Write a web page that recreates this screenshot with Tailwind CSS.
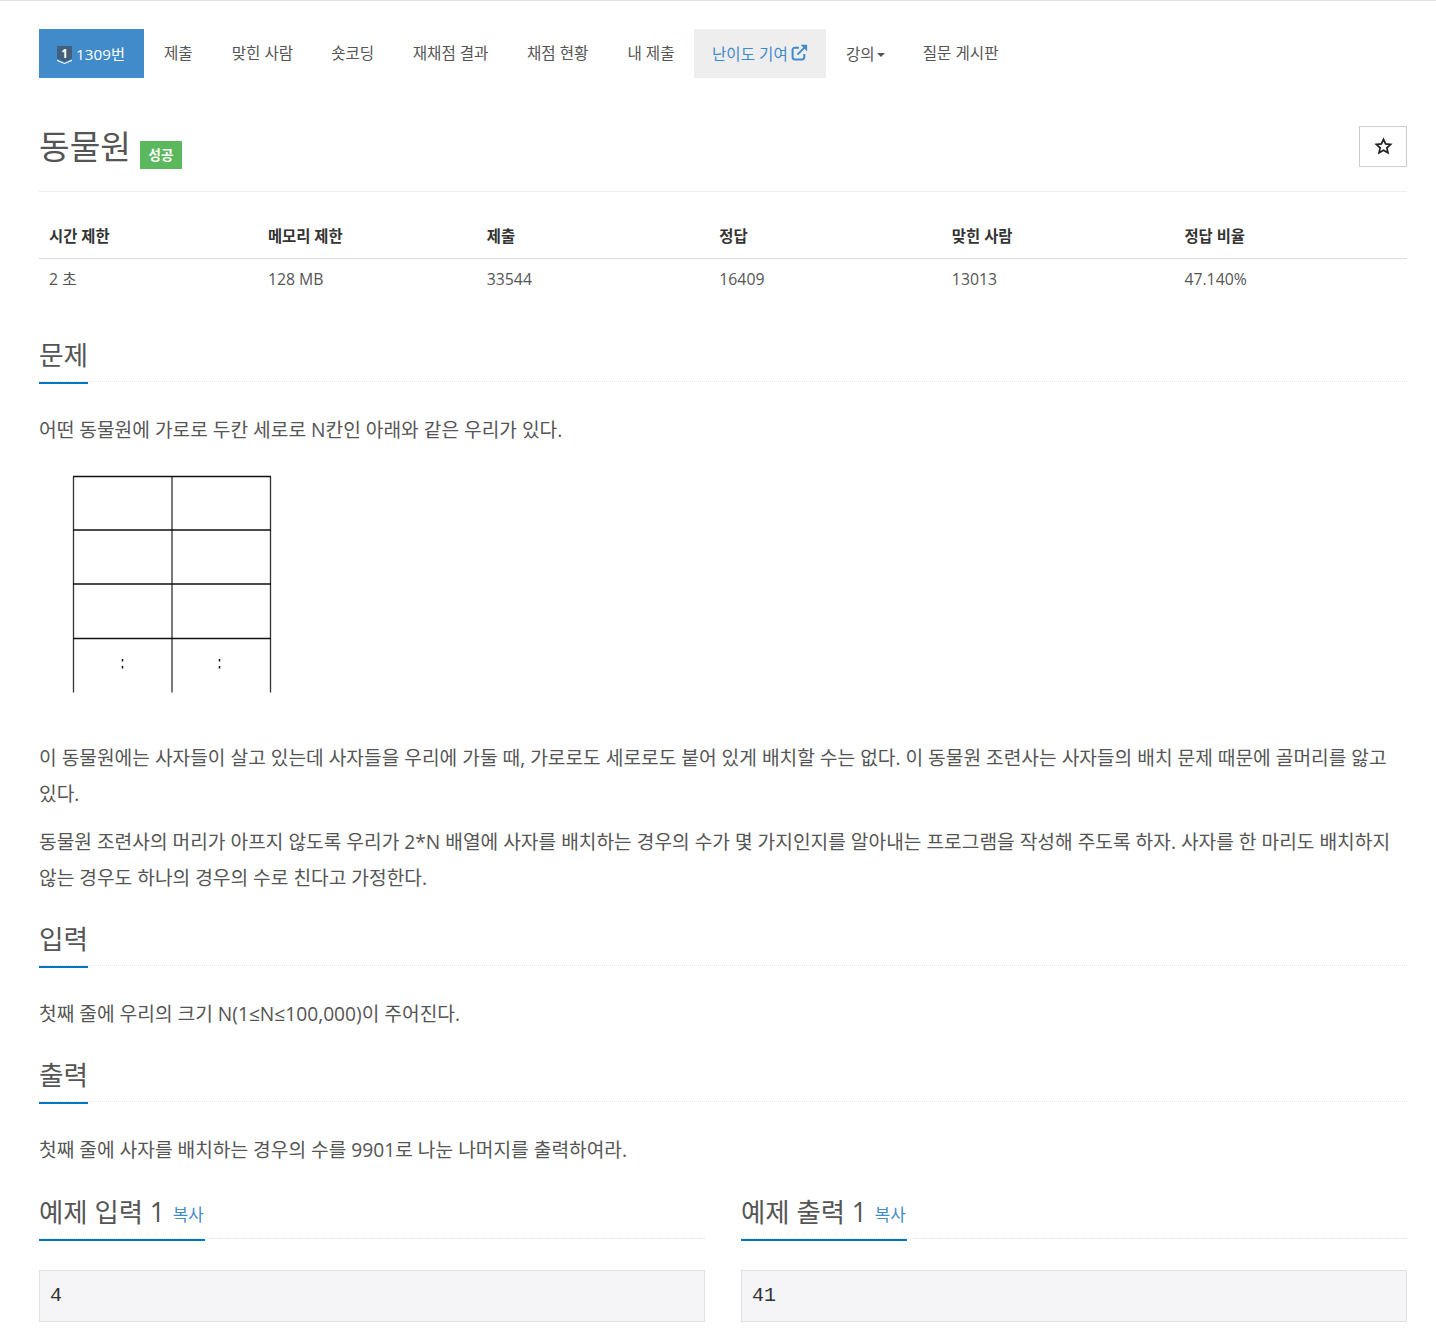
<!DOCTYPE html>
<html lang="ko">
<head>
    <meta charset="UTF-8">
    <meta name="viewport" content="width=device-width, initial-scale=1.0">
    <title>1309번: 동물원</title>
    <script src="https://cdn.jsdelivr.net/npm/@tailwindcss/browser@4"></script>
</head>
<body class="bg-white text-[#555] font-['Open_Sans','Noto_Sans_CJK_KR',sans-serif] border-t border-[#dfe3e6]">
    <div class="pl-[39px] pt-[28px]">
      <div class="w-[1368px]">
        <!-- tabs -->
        <nav class="flex h-[49px] text-[15.600px] leading-[48px] text-[#555]">
            <a class="flex items-center w-[105px] pl-[18px] bg-[#428bca] text-white text-[15.250px]">
                <svg class="w-[15px] h-[18px] mr-[4px] mt-[3px]" viewBox="0 0 15 18">
                    <path d="M0 0h15v12.500l-7.500 3.500-7.500-3.500z" fill="#435f7a"/>
                    <path d="M0 13.800l7.500 3.200 7.500-3.200v1.200l-7.500 3-7.500-3z" fill="#fff"/>
                    <text x="7.500" y="11.500" text-anchor="middle" font-size="11.500" font-weight="700" fill="#fff">1</text>
                </svg>
                1309번
            </a>
            <a class="px-[20px]">제출</a>
            <a class="px-[19px]">맞힌 사람</a>
            <a class="px-[19px]">숏코딩</a>
            <a class="px-[19.500px]">재채점 결과</a>
            <a class="pl-[19px] pr-[19.500px]">채점 현황</a>
            <a class="pl-[19.500px] pr-[19.500px]">내 제출</a>
            <a class="flex items-center px-[18px] w-[132px] bg-[#eee] text-[#428bca]">
                난이도 기여
                <svg class="w-[17px] h-[17px] ml-[3px] mb-[3px]" viewBox="0 0 16 16" fill="none" stroke="#428bca" stroke-width="1.900">
                    <path d="M12.500 9.500v3a2 2 0 0 1-2 2h-7a2 2 0 0 1-2-2v-7a2 2 0 0 1 2-2h4"/>
                    <path d="M6 10l8-8"/>
                    <path d="M9 .800h6.200v6.200z" fill="#428bca" stroke="none"/>
                </svg>
            </a>
            <a class="flex items-center pl-[20px] pr-[19px]">
                강의
                <span class="ml-[2px] mt-[2px] w-0 h-0 border-x-[4px] border-x-transparent border-t-[4px] border-t-[#555]"></span>
            </a>
            <a class="px-[19px]">질문 게시판</a>
        </nav>

        <!-- title -->
        <div class="flex items-start justify-between mt-[48px] h-[66px] border-b border-[#eee]">
            <div class="flex items-start">
                <h1 class="text-[33.300px] leading-[40px] text-[#555] font-normal">동물원</h1>
                <span class="ml-[9px] mt-[15px] w-[42px] h-[28px] bg-[#5cb85c] text-white text-[13.500px] font-semibold leading-[28px] text-center">성공</span>
            </div>
            <button class="w-[48px] h-[41px] border border-[#ccc] flex items-center justify-center">
                <svg class="w-[19px] h-[18px] mb-[2px]" viewBox="0 0 24 24" fill="none" stroke="#222" stroke-width="2.300" stroke-linejoin="miter">
                    <path d="M12 3l2.800 6.200 6.700.7-5 4.500 1.400 6.600-5.900-3.400-5.900 3.400 1.400-6.600-5-4.500 6.700-.7z"/>
                </svg>
            </button>
        </div>

        <!-- stats -->
        <div class="mt-[24px]">
            <div class="grid grid-cols-[16%_16%_17%_17%_17%_17%] h-[43px] border-b border-[#ddd] font-bold text-[15.400px] text-[#333] leading-[42px] [&>div]:pl-[10px]">
                <div>시간 제한</div>
                <div>메모리 제한</div>
                <div>제출</div>
                <div>정답</div>
                <div>맞힌 사람</div>
                <div>정답 비율</div>
            </div>
            <div class="grid grid-cols-[16%_16%_17%_17%_17%_17%] h-[41px] leading-[41px] text-[15.800px] [&>div]:pl-[10px]">
                <div>2 초</div>
                <div>128 MB</div>
                <div>33544</div>
                <div>16409</div>
                <div>13013</div>
                <div>47.140%</div>
            </div>
        </div>

        <!-- problem -->
        <section class="mt-[34px]">
            <div class="h-[48px] border-b border-dotted border-[#e4e4e4]">
                <h2 class="inline-block h-[50px] text-[26.700px] leading-[42px] border-b-2 border-[#0076c0] text-[#555] font-normal">문제</h2>
            </div>
            <div class="mt-[30px] text-[19.200px] leading-[36px]">
                <p>어떤 동물원에 가로로 두칸 세로로 N칸인 아래와 같은 우리가 있다.</p>
                <svg class="block mt-[17px] w-[300px] h-[262px]" viewBox="0 0 300 262" fill="none" stroke="#111" stroke-width="1.300">
                    <path d="M34.500 11.500v216M133 11.500v216M231.500 11.500v216" stroke="#333"/>
                    <path d="M34 11.500h198M34 65h198M34 119h198M34 173.500h198"/>
                    <path d="M83.500 194v2.500M83.500 201v2.500M180.500 194v2.500M180.500 201v2.500" stroke-width="1.500"/>
                </svg>
                <p class="mt-[13px]">이 동물원에는 사자들이 살고 있는데 사자들을 우리에 가둘 때, 가로로도 세로로도 붙어 있게 배치할 수는 없다. 이 동물원 조련사는 사자들의 배치 문제 때문에 골머리를 앓고 있다.</p>
                <p class="mt-[12px]">동물원 조련사의 머리가 아프지 않도록 우리가 2*N 배열에 사자를 배치하는 경우의 수가 몇 가지인지를 알아내는 프로그램을 작성해 주도록 하자. 사자를 한 마리도 배치하지 않는 경우도 하나의 경우의 수로 친다고 가정한다.</p>
            </div>
        </section>

        <!-- input -->
        <section class="mt-[22px]">
            <div class="h-[48px] border-b border-dotted border-[#e4e4e4]">
                <h2 class="inline-block h-[50px] text-[26.700px] leading-[42px] border-b-2 border-[#0076c0] text-[#555] font-normal">입력</h2>
            </div>
            <p class="mt-[30px] text-[19.200px] leading-[36px]">첫째 줄에 우리의 크기 N(1≤N≤100,000)이 주어진다.</p>
        </section>

        <!-- output -->
        <section class="mt-[22px]">
            <div class="h-[48px] border-b border-dotted border-[#e4e4e4]">
                <h2 class="inline-block h-[50px] text-[26.700px] leading-[42px] border-b-2 border-[#0076c0] text-[#555] font-normal">출력</h2>
            </div>
            <p class="mt-[30px] text-[19.200px] leading-[36px]">첫째 줄에 사자를 배치하는 경우의 수를 9901로 나눈 나머지를 출력하여라.</p>
        </section>

        <!-- samples -->
        <div class="grid grid-cols-2 gap-x-[36px] mt-[23px]">
            <section>
                <div class="h-[48px] border-b border-dotted border-[#e4e4e4]">
                    <h2 class="inline-block h-[50px] pr-[1px] text-[26.400px] leading-[42px] border-b-2 border-[#0076c0] text-[#555] font-normal">예제 입력 1 <a class="ml-[1px] align-[1px] text-[16.800px] text-[#428bca]">복사</a></h2>
                </div>
                <pre class="mt-[31px] h-[52px] bg-[#f5f5f7] border border-[#e0e0e5] px-[10px] text-[20px] leading-[50px] text-[#333] font-['Liberation_Mono',monospace]">4</pre>
            </section>
            <section>
                <div class="h-[48px] border-b border-dotted border-[#e4e4e4]">
                    <h2 class="inline-block h-[50px] pr-[1px] text-[26.400px] leading-[42px] border-b-2 border-[#0076c0] text-[#555] font-normal">예제 출력 1 <a class="ml-[1px] align-[1px] text-[16.800px] text-[#428bca]">복사</a></h2>
                </div>
                <pre class="mt-[31px] h-[52px] bg-[#f5f5f7] border border-[#e0e0e5] px-[10px] text-[20px] leading-[50px] text-[#333] font-['Liberation_Mono',monospace]">41</pre>
            </section>
        </div>
      </div>
    </div>
</body>
</html>
